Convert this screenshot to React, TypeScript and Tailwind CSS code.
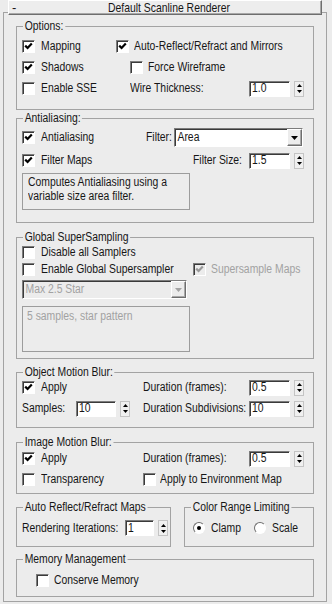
import type { ReactNode } from "react";

const sunken =
  "border border-t-[#7c7c7c] border-l-[#7c7c7c] border-b-white border-r-white shadow-[inset_1px_1px_0_#3a3a3a]";
const raised =
  "border border-t-white border-l-white border-b-[#6e6e6e] border-r-[#6e6e6e] shadow-[inset_-1px_-1px_0_#a8a8a8]";

// the reference font is tall and narrow, so text is squeezed horizontally
const T = ({ children, className = "" }: { children: ReactNode; className?: string }) => (
  <span className={`inline-block shrink-0 origin-left scale-x-[0.83] whitespace-nowrap ${className}`}>{children}</span>
);

const Check = ({ checked = false, disabled = false }: { checked?: boolean; disabled?: boolean }) => (
  <div
    className={`relative flex size-[13px] shrink-0 items-center justify-center ${sunken} ${disabled ? "bg-[#ececec]" : "bg-white"}`}
  >
    {checked && (
      <svg width="9" height="9" viewBox="0 0 9 9">
        <path d="M1.2 3.6 L3.6 6 L7.8 1.6" fill="none" stroke={disabled ? "#9a9a9a" : "#000"} strokeWidth="2.2" />
      </svg>
    )}
  </div>
);

const Radio = ({ checked = false }: { checked?: boolean }) => (
  <div className="flex size-[12px] shrink-0 items-center justify-center rounded-full border border-t-[#6e6e6e] border-l-[#6e6e6e] border-b-white border-r-white bg-white">
    {checked && <div className="size-[4px] rounded-full bg-black" />}
  </div>
);

const Spinner = ({ value, w = 41 }: { value: string; w?: number }) => (
  <div className="flex shrink-0 items-center gap-[4px]">
    <div className={`flex h-[16px] items-center bg-white pl-[2px] ${sunken}`} style={{ width: w }}>
      <T className="leading-none">{value}</T>
    </div>
    <div className="flex h-[16px] w-[10px] flex-col items-center justify-center gap-[3px] border border-[#c4c4c4] bg-[#f0f0f0]">
      <svg width="5" height="3" viewBox="0 0 5 3">
        <polygon points="2.5,0 5,3 0,3" fill="#000" />
      </svg>
      <svg width="5" height="3" viewBox="0 0 5 3">
        <polygon points="0,0 5,0 2.5,3" fill="#000" />
      </svg>
    </div>
  </div>
);

const Dropdown = ({ value, w, disabled = false }: { value: string; w: number; disabled?: boolean }) => (
  <div
    className={`flex h-[19px] shrink-0 items-center justify-between ${sunken} ${disabled ? "bg-[#ececec] text-[#a2a2a2]" : "bg-white"}`}
    style={{ width: w }}
  >
    <T className="pl-[3px]">{value}</T>
    <div className={`flex h-[17px] w-[15px] items-center justify-center bg-[#ececec] ${raised}`}>
      <svg width="7" height="4" viewBox="0 0 7 4">
        <polygon points="0,0 7,0 3.5,4" fill={disabled ? "#a2a2a2" : "#000"} />
      </svg>
    </div>
  </div>
);

const Group = ({
  title,
  className,
  children,
}: {
  title: string;
  className: string;
  children: ReactNode;
}) => (
  <div className={`relative border border-[#a3a3a3] ${className}`}>
    <span className="absolute left-[6px] top-[-8px] origin-left scale-x-[0.83] whitespace-nowrap bg-[#ececec] px-[2px] leading-[14px]">
      {title}
    </span>
    {children}
  </div>
);

export default function App() {
  return (
    <div className="h-[604px] w-[332px] overflow-hidden bg-[#ececec] font-['Liberation_Sans',Arial,sans-serif] text-[12.5px] text-[#161616]">
      {/* rollout header */}
      <div className={`relative z-10 ml-[8px] flex h-[15px] w-[314px] items-center bg-[#ededed] text-[13px] ${raised}`}>
        <span className="w-[8px] pl-[3px] leading-none">-</span>
        <span className="flex-1 scale-x-[0.8] text-center leading-none">Default Scanline Renderer</span>
      </div>

      {/* rollout frame */}
      <div className="-mt-[3px] ml-[3px] h-[590px] w-[324px] border border-[#a3a3a3]">
        <div className="ml-[12px] flex w-[298px] flex-col">
          <Group title="Options:" className="mt-[13px] h-[84px] pl-[5px] pt-[9px]">
            <div className="flex h-[21px] items-center">
              <div className="flex w-[108px] items-center gap-[6px]">
                <Check checked />
                <T>Mapping</T>
              </div>
              <div className="flex items-center gap-[5px]">
                <Check checked />
                <T>Auto-Reflect/Refract and Mirrors</T>
              </div>
            </div>
            <div className="flex h-[21px] items-center">
              <div className="flex w-[108px] items-center gap-[6px]">
                <Check checked />
                <T>Shadows</T>
              </div>
              <div className="flex items-center gap-[5px]">
                <Check />
                <T>Force Wireframe</T>
              </div>
            </div>
            <div className="flex h-[21px] items-center">
              <div className="flex w-[108px] items-center gap-[6px]">
                <Check />
                <T>Enable SSE</T>
              </div>
              <div className="w-[119px]">
                <T>Wire Thickness:</T>
              </div>
              <Spinner value="1.0" />
            </div>
          </Group>

          <Group title="Antialiasing:" className="mt-[8px] h-[105px] pl-[5px] pt-[8px]">
            <div className="flex h-[21px] items-center">
              <div className="flex w-[124px] items-center gap-[6px]">
                <Check checked />
                <T>Antialiasing</T>
              </div>
              <div className="w-[28px]">
                <T>Filter:</T>
              </div>
              <Dropdown value="Area" w={129} />
            </div>
            <div className="mt-[2px] flex h-[21px] items-center">
              <div className="flex w-[171px] items-center gap-[6px]">
                <Check checked />
                <T>Filter Maps</T>
              </div>
              <div className="w-[56px]">
                <T>Filter Size:</T>
              </div>
              <Spinner value="1.5" />
            </div>
            <div className="mt-[2px] flex h-[37px] w-[168px] flex-col border border-[#9c9c9c] px-[5px] pt-[1px] leading-[14px]">
              <T>Computes Antialiasing using a</T>
              <T>variable size area filter.</T>
            </div>
          </Group>

          <Group title="Global SuperSampling" className="mt-[14px] h-[122px] pl-[5px] pt-[6px]">
            <div className="flex h-[17px] items-center gap-[6px]">
              <Check />
              <T>Disable all Samplers</T>
            </div>
            <div className="flex h-[17px] items-center">
              <div className="flex w-[171px] items-center gap-[6px]">
                <Check />
                <T>Enable Global Supersampler</T>
              </div>
              <div className="flex items-center gap-[5px] text-[#a2a2a2]">
                <Check checked disabled />
                <T>Supersample Maps</T>
              </div>
            </div>
            <div className="mt-[2px]">
              <Dropdown value="Max 2.5 Star" w={165} disabled />
            </div>
            <div className="mt-[7px] h-[46px] w-[168px] border border-[#9c9c9c] px-[4px] pt-[2px] leading-[14px] text-[#a2a2a2]">
              <T>5 samples, star pattern</T>
            </div>
          </Group>

          <Group title="Object Motion Blur:" className="mt-[13px] h-[56px] pl-[5px] pt-[4px]">
            <div className="flex h-[21px] items-center">
              <div className="flex w-[121px] items-center gap-[6px]">
                <Check checked />
                <T>Apply</T>
              </div>
              <div className="w-[106px]">
                <T>Duration (frames):</T>
              </div>
              <Spinner value="0.5" />
            </div>
            <div className="flex h-[21px] items-center">
              <div className="flex w-[121px] items-center">
                <div className="w-[54px]">
                  <T>Samples:</T>
                </div>
                <Spinner value="10" w={40} />
              </div>
              <div className="w-[106px]">
                <T>Duration Subdivisions:</T>
              </div>
              <Spinner value="10" />
            </div>
          </Group>

          <Group title="Image Motion Blur:" className="mt-[14px] h-[52px] pl-[5px] pt-[5px]">
            <div className="flex h-[21px] items-center">
              <div className="flex w-[121px] items-center gap-[6px]">
                <Check checked />
                <T>Apply</T>
              </div>
              <div className="w-[106px]">
                <T>Duration (frames):</T>
              </div>
              <Spinner value="0.5" />
            </div>
            <div className="flex h-[21px] items-center">
              <div className="flex w-[121px] items-center gap-[6px]">
                <Check />
                <T>Transparency</T>
              </div>
              <div className="flex items-center gap-[4px]">
                <Check />
                <T>Apply to Environment Map</T>
              </div>
            </div>
          </Group>

          <div className="mt-[13px] flex gap-[13px]">
            <Group title="Auto Reflect/Refract Maps" className="h-[40px] w-[155px] pl-[5px] pt-[10px]">
              <div className="flex h-[20px] items-center">
                <div className="w-[103px]">
                  <T>Rendering Iterations:</T>
                </div>
                <Spinner value="1" w={29} />
              </div>
            </Group>
            <Group title="Color Range Limiting" className="h-[40px] w-[130px] pl-[8px] pt-[10px]">
              <div className="flex h-[20px] items-center">
                <div className="flex w-[61px] items-center gap-[6px]">
                  <Radio checked />
                  <T>Clamp</T>
                </div>
                <div className="flex items-center gap-[6px]">
                  <Radio />
                  <T>Scale</T>
                </div>
              </div>
            </Group>
          </div>

          <Group title="Memory Management" className="mt-[12px] h-[38px] pl-[19px] pt-[10px]">
            <div className="flex h-[20px] items-center gap-[5px]">
              <Check />
              <T>Conserve Memory</T>
            </div>
          </Group>
        </div>
      </div>
    </div>
  );
}
